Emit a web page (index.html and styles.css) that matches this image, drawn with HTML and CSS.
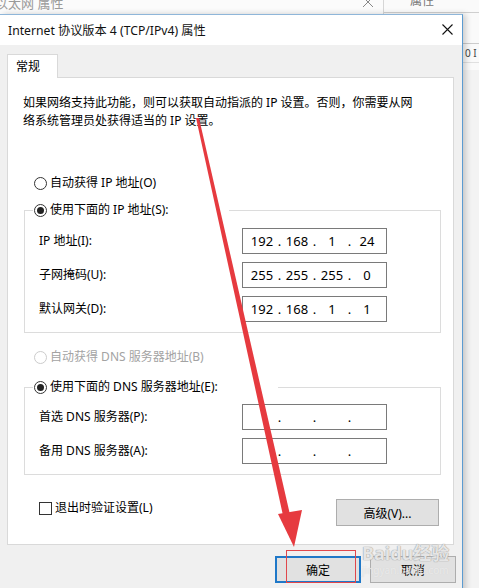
FILE: index.html
```html
<!DOCTYPE html>
<html lang="zh-CN">
<head>
  <meta charset="UTF-8" />
  <title>Internet 协议版本 4 (TCP/IPv4) 属性</title>
  <link rel="stylesheet" href="styles.css">
</head>
<body>
  <div class="desktop">
    <!-- windows behind the dialog -->
    <div class="back-window">
      <span class="back-title">以太网 属性</span>
      <svg class="back-close" width="10" height="10" viewBox="0 0 10 10"><path d="M0 0L10 10M10 0L0 10" stroke="#888" stroke-width="1" fill="none"/></svg>
    </div>
    <div class="side-window">
      <div class="side-head"><span>属性</span></div>
      <div class="side-row"></div>
      <div class="side-row small">0 I</div>
    </div>

    <div class="dialog">
      <div class="titlebar">
        <span class="title">Internet 协议版本 4 (TCP/IPv4) 属性</span>
        <svg class="close" width="11" height="11" viewBox="0 0 11 11"><path d="M0.5 0.5L10.5 10.5M10.5 0.5L0.5 10.5" stroke="#111" stroke-width="1.1" fill="none"/></svg>
      </div>

      <div class="dialog-body">
        <div class="tab">常规</div>
        <div class="panel">
          <p class="intro">如果网络支持此功能，则可以获取自动指派的 IP 设置。否则，你需要从网<br>络系统管理员处获得适当的 IP 设置。</p>

          <label class="radio first"><span class="dot"></span>自动获得 IP 地址(O)</label>

          <fieldset class="group">
            <legend><label class="radio"><span class="dot checked"></span>使用下面的 IP 地址(S):</label></legend>
            <div class="fields">
              <span class="field-label">IP 地址(I):</span>
              <div class="ip"><span class="oct">192</span><span class="sep">.</span><span class="oct">168</span><span class="sep">.</span><span class="oct">1</span><span class="sep">.</span><span class="oct">24</span></div>
              <span class="field-label">子网掩码(U):</span>
              <div class="ip"><span class="oct">255</span><span class="sep">.</span><span class="oct">255</span><span class="sep">.</span><span class="oct">255</span><span class="sep">.</span><span class="oct">0</span></div>
              <span class="field-label">默认网关(D):</span>
              <div class="ip"><span class="oct">192</span><span class="sep">.</span><span class="oct">168</span><span class="sep">.</span><span class="oct">1</span><span class="sep">.</span><span class="oct">1</span></div>
            </div>
          </fieldset>

          <label class="radio disabled"><span class="dot"></span>自动获得 DNS 服务器地址(B)</label>

          <fieldset class="group dns">
            <legend><label class="radio"><span class="dot checked"></span>使用下面的 DNS 服务器地址(E):</label></legend>
            <div class="fields">
              <span class="field-label">首选 DNS 服务器(P):</span>
              <div class="ip"><span class="oct"></span><span class="sep">.</span><span class="oct"></span><span class="sep">.</span><span class="oct"></span><span class="sep">.</span><span class="oct"></span></div>
              <span class="field-label">备用 DNS 服务器(A):</span>
              <div class="ip"><span class="oct"></span><span class="sep">.</span><span class="oct"></span><span class="sep">.</span><span class="oct"></span><span class="sep">.</span><span class="oct"></span></div>
            </div>
          </fieldset>

          <div class="footer-row">
            <label class="check"><span class="box"></span>退出时验证设置(L)</label>
            <button class="btn advanced">高级(V)...</button>
          </div>
        </div>

        <div class="actions">
          <button class="btn ok">确定</button>
          <button class="btn">取消</button>
        </div>
      </div>
    </div>

    <!-- annotations drawn over the screenshot -->
    <svg class="arrow" width="479" height="588" viewBox="0 0 479 588">
      <polygon points="196,118 199,118 291,519 284,520" fill="#e63a3f"/>
      <polygon points="278,514 302,510 294,547" fill="#e63a3f"/>
      <rect x="286.5" y="550.5" width="69" height="32" fill="none" stroke="#e0474c" stroke-width="1"/>
    </svg>
    <div class="watermark">Bai<span class="paw">du</span>经验<small>jingyan.baidu.com</small></div>
  </div>
</body>
</html>
```

FILE: styles.css
```css
body {
  margin: 0;
  font-family: "Noto Sans", "Noto Sans CJK SC", sans-serif;
  font-size: 12px;
  color: #000;
}
.desktop {
  position: relative;
  width: 479px;
  height: 588px;
  overflow: hidden;
  background: #f3f3f3;
}
.back-window {
  position: absolute;
  left: 0;
  top: 0;
  width: 383px;
  height: 14px;
  background: #fbfbfb;
  border-right: 1px solid #d6d6d6;
  overflow: hidden;
}
.back-title {
  position: absolute;
  left: -5px;
  top: -7px;
  font-size: 13px;
  color: #9a9a9a;
}
.back-close {
  position: absolute;
  left: 363px;
  top: -3px;
}
.side-window {
  position: absolute;
  left: 384px;
  top: 0;
  width: 95px;
  height: 70px;
  background: #fafafa;
}
.side-head {
  height: 12px;
  border-bottom: 1px solid #cfcfcf;
  overflow: hidden;
  position: relative;
}
.side-head span {
  position: absolute;
  left: 26px;
  top: -9px;
  color: #777;
}
.side-row {
  height: 30px;
  border-bottom: 1px solid #cccccc;
}
.side-row.small {
  height: 18px;
  padding-left: 81px;
  font-size: 10px;
  line-height: 18px;
  color: #444;
  border-bottom-color: #e0e0e0;
}

.dialog {
  position: absolute;
  left: 0;
  top: 14px;
  width: 463px;
  height: 590px;
  background: #f0f0f0;
  border-top: 1px solid #8fb6d9;
  border-right: 1px solid #5b9bd1;
  box-sizing: border-box;
  box-shadow: 3px 0 6px rgba(0, 0, 0, 0.18);
}
.titlebar {
  height: 30px;
  background: #fff;
  display: flex;
  align-items: center;
  justify-content: space-between;
  padding: 0 9px 0 8px;
}
.title {
  color: #111;
  font-size: 12.2px;
}
.close {
  margin-top: -1px;
}

.dialog-body {
  padding: 9px 0 0 7px;
}
.tab {
  position: relative;
  z-index: 1;
  width: 51px;
  height: 24px;
  box-sizing: border-box;
  padding-left: 8px;
  line-height: 24px;
  background: #fff;
  border: 1px solid #d9d9d9;
  border-bottom: none;
  margin-bottom: -1px;
}
.panel {
  width: 447px;
  box-sizing: border-box;
  background: #fff;
  border: 1px solid #d9d9d9;
  padding: 16px 13px 18px 15px;
}
.intro {
  margin: 0;
  line-height: 18px;
  white-space: nowrap;
}

.radio, .check {
  display: flex;
  align-items: center;
  height: 18px;
  line-height: 18px;
  white-space: nowrap;
}
.radio.first {
  margin-top: 44px;
  padding-left: 11px;
}
.dot {
  width: 13px;
  height: 13px;
  box-sizing: border-box;
  border: 1px solid #333;
  border-radius: 50%;
  margin-right: 3px;
  display: flex;
  align-items: center;
  justify-content: center;
}
.dot.checked::after {
  content: "";
  width: 7px;
  height: 7px;
  border-radius: 50%;
  background: #222;
}
.radio.disabled {
  margin-top: 15px;
  padding-left: 11px;
  color: #a3a3a3;
}
.radio.disabled .dot {
  border-color: #cccccc;
}

.group {
  margin: 9px 0 0 1px;
  width: 417px;
  box-sizing: border-box;
  padding: 0;
  border: 1px solid #dcdcdc;
}
.group legend {
  margin-left: 8px;
  padding: 0 60px 0 1px;
}
.group.dns {
  margin-top: 12px;
}
.fields {
  display: grid;
  grid-template-columns: 203px 145px;
  row-gap: 8px;
  align-items: center;
  padding: 9px 0 10px 14px;
}
.group.dns .fields {
  padding-top: 8px;
}
.field-label {
  line-height: 18px;
}
.ip {
  display: flex;
  height: 26px;
  box-sizing: border-box;
  border: 1px solid #7a7a7a;
  padding-left: 4px;
  align-items: center;
  font-size: 13px;
}
.oct {
  width: 30px;
  text-align: center;
}
.sep {
  width: 5px;
  text-align: center;
}

.footer-row {
  display: flex;
  justify-content: space-between;
  align-items: flex-start;
  margin-top: 24px;
  padding: 0 1px 0 16px;
}
.box {
  width: 13px;
  height: 13px;
  box-sizing: border-box;
  border: 1px solid #333;
  margin-right: 3px;
}
.btn {
  font-family: inherit;
  font-size: 12px;
  color: #000;
  background: #e1e1e1;
  border: 1px solid #adadad;
  width: 86px;
  height: 27px;
  padding: 0;
}
.btn.advanced {
  width: 103px;
}
.actions {
  display: flex;
  justify-content: flex-end;
  gap: 9px;
  margin-top: 11px;
  padding-right: 6px;
}
.btn.ok {
  border: 2px solid #1f78c8;
}

.arrow {
  position: absolute;
  left: 0;
  top: 0;
  pointer-events: none;
}
.watermark {
  position: absolute;
  left: 362px;
  top: 542px;
  font-size: 18px;
  font-weight: bold;
  color: rgba(255, 255, 255, 0.75);
  text-shadow: 0 0 1px #9a9a9a, 0 0 1px #9a9a9a;
  line-height: 22px;
  pointer-events: none;
}
.watermark small {
  display: block;
  font-size: 10px;
  font-weight: normal;
  line-height: 12px;
  color: rgba(255, 255, 255, 0.5);
  text-shadow: 0 0 1px #cfcfcf;
}
```
